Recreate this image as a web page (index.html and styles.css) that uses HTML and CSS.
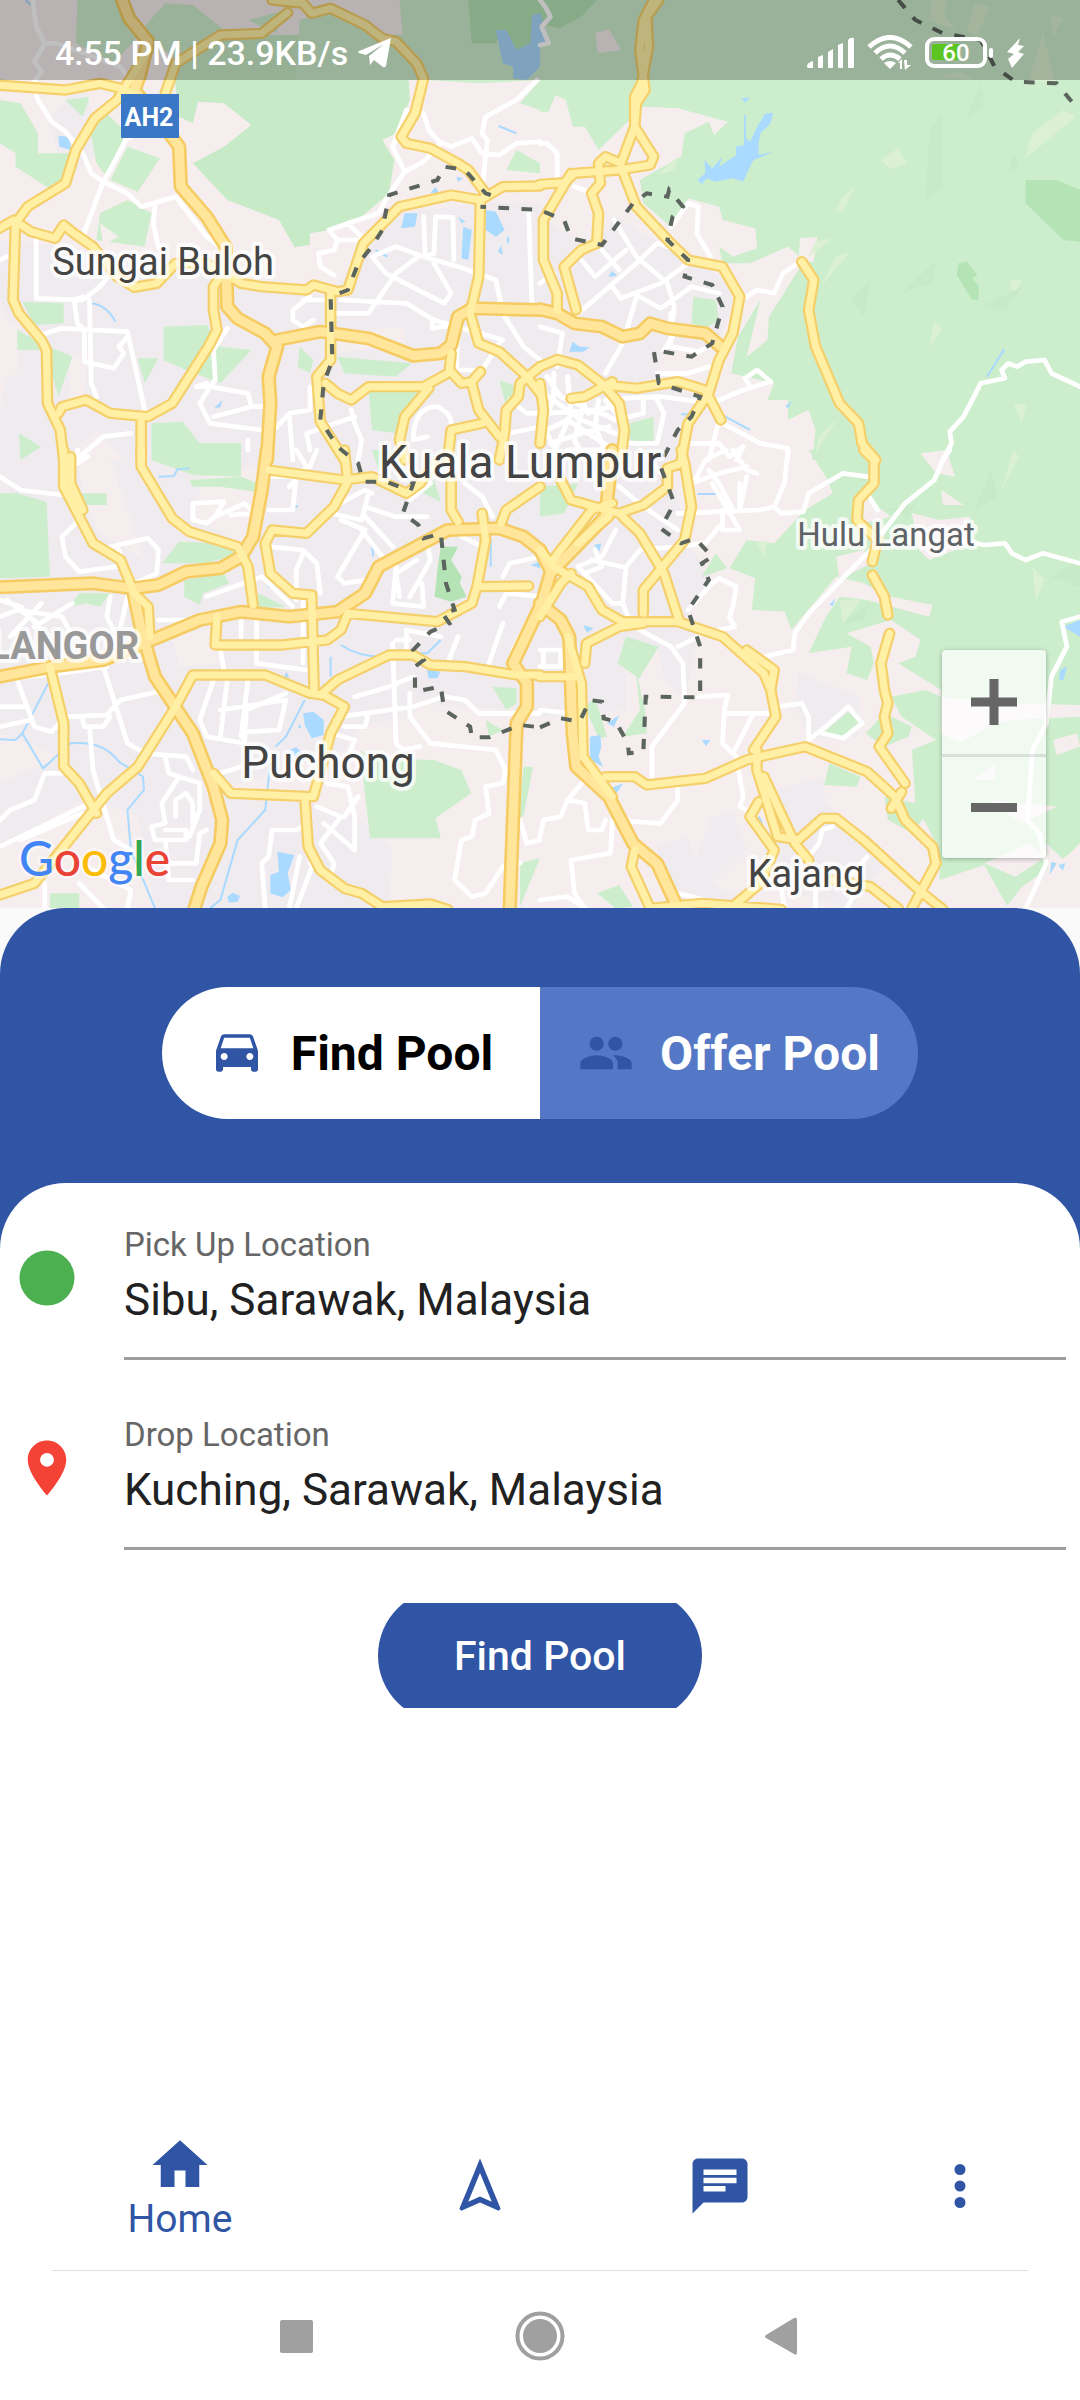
FILE: index.html
```html
<!DOCTYPE html>
<html lang="en">
<head>
<meta charset="utf-8">
<meta name="viewport" content="width=device-width, initial-scale=1">
<title>Car Pool</title>
<link rel="stylesheet" href="styles.css">
</head>
<body>
<section class="map" aria-label="Map of Kuala Lumpur">
  <svg class="map-canvas" viewBox="0 0 1080 908" preserveAspectRatio="xMidYMid slice">
    <defs>
      <g id="highways">
        <path d="M355 0L375 55L430 125L405 230L390 270L470 370L520 440L525 560L600 650L655 740L660 920L690 955L770 1000L805 1040L780 1130L785 1210L775 1380M805 1020L930 995L1070 1015L1200 1067L1280 1060L1310 1035L1330 950L1370 925L1568 930"/>
        <path transform="translate(1568 0)" d="M0 928L50 940L100 970L180 980L240 1010L290 1000L320 970L370 985L480 1000L525 1040"/>
        <path transform="translate(0 1350)" d="M775 0L760 120L735 260L700 320L640 355L540 365L460 405L385 415L270 400L0 412M385 415L410 540L450 680L560 850L620 1010L645 1110L640 1180L585 1310L565 1375M0 680L150 650L300 630L430 575L580 510L700 485L840 500L980 485L1060 430L1100 350L1300 240L1450 235L1520 260L1568 300M1568 470L1490 640L1530 700L1530 770L1500 820L1480 1375"/>
        <path transform="translate(1568 1350)" d="M0 480L30 370L190 200L210 0M0 300L30 360M0 460L60 510L85 560L95 850L105 950L200 1040L270 1180L340 1240L400 1375"/>
      </g>
      <g id="arterials">
        <path d="M-10 255L190 270L290 250L350 265L390 280M430 150L340 300L275 355L220 450L190 550L80 620L45 670L38 900L55 940L120 1020L135 1050L138 1210L175 1290L185 1380M480 280L510 190L640 105L760 100L835 38M790 0L880 10L905 40L960 25L1060 75L1110 115L1150 125L1210 190L1230 235L1205 340L1165 410L1180 430L1250 445L1330 490L1360 510L1410 580M-10 690L40 660L90 695L160 715L185 675L215 700L270 740L340 830L390 862L455 850L510 790L600 790L700 850L760 860L890 870L910 855L980 875L1010 870L1055 730L1160 620L1310 585L1395 600L1460 560L1568 558"/>
        <path d="M640 830L620 860L620 930L630 990L605 1040L500 1210L430 1250L320 1240L250 1200L180 1220L170 1240M410 1250L410 1380M960 880L960 1080L920 1130L930 1265L1000 1380M1395 600L1390 830L1365 940L1390 1030L1450 1055L1530 1130L1568 1180M945 1150L980 1180L1020 1200L1070 1160L1230 1160L1300 1120M1310 1060L1305 1110L1340 1150L1370 1145L1395 1115M1370 1150L1390 1230L1450 1310M1245 1165L1175 1250L1160 1320L1175 1380M1400 1270L1310 1290L1300 1380M1568 1100L1510 1150L1505 1190L1470 1230L1465 1300L1450 1380"/>
        <path transform="translate(1568 0)" d="M0 553L70 548L100 520L230 510L320 495L330 470L275 380L280 310L305 270L290 150L300 60L330 0M345 0L310 50L315 140L295 250L275 290L275 380L235 490L190 470L170 490L175 550L150 580L170 640L165 730L120 750L70 800L105 930M90 520L10 660L10 780L50 880L50 930M235 500L280 620L380 730L430 780L530 800L580 890L560 1000L520 1080L490 1180L430 1270L410 1380M0 1100L50 1078L110 1095L185 1155L280 1165L400 1145L480 1170L525 1260M90 1195L130 1190L210 1145M185 1155L230 1210L245 1290L235 1380M0 1150L10 1230L0 1330M760 785L795 840L780 930L800 1040L870 1210L925 1270L935 1330L975 1380"/>
        <path transform="translate(0 1350)" d="M185 0L185 110L235 210L270 280L350 330L390 430L430 470L435 560M205 20L205 100L240 180M410 0L410 50L500 205L550 245L690 290L720 350L735 465M780 60L1000 90L1080 80L1180 130L1220 100L1260 40M1000 0L1010 95L970 170L890 250L790 240L770 280L785 370L850 430L905 435L912 720M630 500L625 585L820 585L950 570L990 540L1010 490L1270 515L1370 460L1385 410L1535 408M1385 410L1410 270L1400 190M145 650L185 820L185 950L230 1000L280 1090M0 1335L100 1300L310 1030L400 950L510 770L560 675L770 675L900 730L940 735L1000 770L960 850L910 1040L670 1030L620 970M885 1040L895 1190L930 1260L1000 1315L1050 1330L1110 1370L1250 1362L1300 1378M930 735L980 690L1130 615L1200 615L1250 645L1350 650L1500 675L1568 675M1310 80L1310 180L1330 215M1568 110L1470 180L1455 220"/>
        <path transform="translate(1568 1350)" d="M0 680L100 680M0 300L40 350L140 410L180 480L240 515L400 515L530 560L650 670L670 720L685 800L620 900M600 600L680 660L670 720M130 640L135 580L230 530L300 520M300 490L300 420L420 270L440 170L420 40L410 0M240 200L290 250L360 370L405 515M60 90L90 150L230 190L300 165L370 110L370 55L410 40M30 340L150 180L210 160M110 280L200 200M0 500L60 400L90 370M80 560L120 700L125 920L210 1040M190 980L275 980L310 1005L480 985L600 930L660 915L770 890L950 965L1030 1040L1060 1110L1140 1190L1150 1240L1080 1375M1020 1075L1050 1025M630 900L630 960L690 1160L750 1170L820 1105L860 1105L940 1170L1100 1320L1170 1378M650 980L740 1180L780 1230M635 1055L610 1100L680 1200L640 1300L570 1360M850 1290L960 1310L1040 1375M275 1200L265 1250L320 1375L470 1360L700 1378"/>
        <path transform="translate(1568 1350)" d="M940 0L970 30L970 100L925 150L920 210L980 270L965 335M965 375L1000 440L1010 495M1015 550L990 640L1000 720L1010 760L1000 800L1010 850L985 890L1060 1000"/>
      </g>
    </defs>
    <rect width="1080" height="908" fill="#f6eeee"/>
    <g transform="scale(.34439 .33333)">
      <g fill="#efebef">
        <path d="M0 720L100 730L600 800L700 860L960 890L1050 740L1150 640L1400 610H1568V1380H0V1230L40 1000L0 900ZM240 240L140 360L190 540L300 440Z"/>
        <path transform="translate(1568 0)" d="M0 650L150 740L220 650L400 760L530 830L560 900L520 1030L350 1050L340 1150L460 1190L400 1380H0Z"/>
        <path transform="translate(0 1350)" d="M0 0H1568V780L1240 770L1190 800L1040 830L1000 900L700 1000L640 1000L700 1050L900 1060L1040 1100L1140 1200L1130 1375H450L400 1100L250 1040L0 1200V1000L180 920L0 850Z"/>
        <path transform="translate(1568 1350)" d="M0 0H360L440 300L500 380L430 480L460 560L420 740L360 690L340 590L250 600L250 780L120 800H0ZM750 670L930 740L920 860L780 870L740 760ZM560 1090L600 1200L500 1300L640 1375H380L340 1190L430 1160L450 1230L500 1100ZM690 1020L820 980L830 1060L1000 1240L900 1375L640 1300Z"/>
      </g>
      <g fill="#f6eeee">
        <path d="M0 980L60 960L50 1120L0 1150ZM200 1060L260 1060L240 1190L200 1200ZM280 1290L360 1380H180ZM960 1000L1170 980L1180 1030L970 1060Z"/>
        <path transform="translate(0 1350)" d="M220 0L310 0L420 330L280 240L240 120ZM500 560L620 530L640 640L520 650ZM600 60L760 50L750 240L700 280L560 200ZM1200 760L1500 780L1480 880L1200 900Z"/>
      </g>
      <g fill="#cdeecd">
        <path fill="#c7ebc7" d="M500 180L640 105H1180L1190 300L1150 400L1110 420L1145 480L1130 580L1050 650L960 690L900 700V735L855 742L810 660L660 600L560 490L650 440L730 375L650 310L575 305L560 370L520 350Z"/>
        <path d="M720 60L830 30L800 100ZM870 60L960 30L1080 90L1170 120L1160 0H1568V240L1390 250L1240 240L1180 240H860ZM225 0H340L400 110L330 190L220 130ZM410 90L480 10L560 15L650 90L510 180ZM0 300L60 310L110 400L110 460L220 460L200 540L150 570L45 500V460L0 430ZM190 300L260 290L240 350ZM260 380L310 340L370 400L310 530L280 490ZM370 440L465 475L400 575L320 540ZM290 640L370 600L440 640L420 740L280 720ZM475 980L600 975L640 1040L730 1050L640 1150L540 1110L475 1080ZM65 905L185 910V970L100 975ZM50 990L120 1030L210 1070L170 1190L130 1050H50ZM980 1070L1195 1090L1150 1130L1000 1120ZM1070 1170L1230 1170L1150 1300L1080 1290ZM440 1270L530 1265L580 1330H700V1430L560 1425L440 1380ZM400 1075L460 1075L420 1150ZM55 1300L120 1340L60 1380ZM1510 310L1568 240V330ZM1500 450L1568 490V520L1470 510ZM870 1040L910 1080L900 1120L865 1100ZM1450 1140L1500 1160L1470 1220Z"/>
        <path transform="translate(1568 0)" d="M0 0H1568V1380H790L800 1290L780 1230L720 1260V1200H660L680 1150L555 1120L575 1010L640 900L600 1070L660 1020L665 950L750 810L755 770L720 740L610 790L530 790L520 740L560 770L630 745L625 685L530 660L520 620L430 595L380 680L300 610L290 540L340 510L410 470L420 400L490 365L505 405L545 365L400 325L300 320L250 370L170 450L130 380H95L75 300L45 285L25 335H0ZM445 890L510 900L520 960L480 985L440 970ZM260 1270L330 1250V1330L260 1320Z"/>
        <path transform="translate(0 1350)" d="M0 130L50 130L135 155L145 380L0 385ZM215 130H310V165H240ZM470 340L520 275L640 280L700 310L600 340ZM535 390L650 370L665 400L590 430L580 465L535 440ZM550 90L700 80L750 100L740 125L640 110L560 110ZM750 430L830 470L750 475ZM1045 900L1080 925L1260 930L1340 960L1368 1030L1265 1105L1280 1165H1075ZM1430 710L1500 715V760L1470 780ZM145 1330H230V1375H145ZM1520 950H1548L1520 1100H1505ZM1510 1240L1568 1225L1530 1320L1510 1370ZM200 470L230 430L320 430L290 470L250 460ZM1210 120L1260 90L1280 155ZM1410 810L1460 840L1420 860ZM1080 0H1160L1100 60ZM0 880V910Z"/>
        <path transform="translate(1568 1350)" d="M780 0H1568V1180L1520 1230L1470 1180L1480 1375H1360L1290 1245L1160 1290V1200L1110 1100L1140 1070L1080 1150L1010 1110L1000 1040L1090 1060L1080 900L1150 870L1050 800L1020 740L1120 720L1165 740V720L1040 640L1090 620L1105 570L1020 510L890 550L960 590L970 640L950 690L890 670L905 590L780 610L830 500L870 440L950 450L1130 500L1140 465L1020 440L940 400L860 380L730 540L710 485L615 480L625 385L550 355L600 270L680 280L770 180L850 130L830 80ZM250 560L345 590L285 690L305 780L310 850L240 860L290 780L280 680L225 640ZM130 770L160 745L195 860L170 865ZM840 940L930 980L920 1010L825 1005ZM945 850L1000 790L1080 830L1070 860L1000 890ZM165 1330L230 1305L270 1370L220 1375ZM470 380L510 310L545 355ZM0 110L110 100L70 190L0 200ZM820 850L895 785L930 820L875 865Z"/>
      </g>
      <g fill="#f6eeee">
        <path d="M290 670L345 710L300 735Z"/>
        <path transform="translate(1568 0)" d="M755 715L805 712L795 785L750 790ZM160 100L200 88L235 150L168 160ZM1105 1365L1170 1365L1150 1380Z"/>
        <path transform="translate(1568 1350)" d="M1105 10L1180 0L1205 80L1150 70ZM1165 120L1230 165L1170 165ZM860 320L940 300L960 340L870 390ZM1080 190L1160 210L1250 200L1230 290L1130 330L1100 300ZM940 140L1020 200L940 220ZM1490 870L1560 850L1568 890L1500 915ZM1165 740L1350 760L1568 765V800L1370 810L1300 830L1220 880L1165 850ZM1290 1240L1420 1180L1470 1220L1380 1280ZM1170 1290L1260 1290L1270 1375H1180ZM1400 1310L1568 1190V1375H1350ZM1260 990L1320 940V990ZM1300 1050L1500 1070L1400 1120Z"/>
      </g>
      <g fill="#b4e3b5">
        <path d="M1360 0H1568V140L1500 150L1460 90L1440 130H1370Z"/>
        <path transform="translate(1568 0)" d="M1410 540H1500L1568 570V725L1520 720L1410 610ZM1215 790L1240 785L1270 825L1255 835L1275 860L1272 900H1255L1210 825ZM0 0H165L120 50L55 85L0 70Z"/>
        <path transform="translate(0 1350)" d="M1280 290L1330 290L1310 330L1340 380L1335 400L1355 440L1310 455L1262 440L1270 360Z"/>
      </g>
      <g fill="#dbf1d2">
        <path transform="translate(1568 0)" d="M1410 475L1430 400L1520 330L1555 350ZM990 480L1040 445L1065 490L1020 508ZM860 630L880 590L915 560L880 635ZM815 860L860 770L900 755ZM1130 1045L1145 965L1168 985ZM1365 840L1400 840L1375 895ZM1375 1210L1412 1215L1400 1270ZM1420 240L1460 100L1498 250ZM1135 0L1180 0L1175 50L1210 90L1130 60ZM1260 10L1305 20L1270 110L1240 90ZM1480 45L1520 55L1490 110ZM340 525L400 470L390 510ZM1160 230L1220 215L1260 240ZM800 1360L810 1310L865 1255ZM780 770L800 725L850 715Z"/>
        <path transform="translate(1568 1350)" d="M870 450L930 450L880 520ZM1430 350L1465 390L1440 450ZM1340 120L1375 0L1390 20ZM630 280L660 270L650 320Z"/>
      </g>
      <g fill="#c8eac7">
        <path transform="translate(1568 0)" d="M1130 400L1165 340L1170 560L1120 600ZM1360 520L1375 460L1390 500ZM900 900L960 840L940 950ZM1240 350L1280 250L1290 320ZM1050 880L1150 780L1140 850ZM1280 920L1400 860L1350 930Z"/>
        <path transform="translate(1568 1350)" d="M1000 180L1090 160L1070 200ZM880 520L955 460L940 510ZM1260 180L1310 60L1330 140ZM1480 380L1568 330V410Z"/>
      </g>
      <g fill="#aadaff">
        <path d="M170 408L200 410L207 450L172 440ZM1440 90L1470 90L1500 150L1540 130L1545 45L1568 40V200L1530 240L1490 235L1490 200L1460 190ZM1175 640L1212 640L1205 680L1165 685ZM1410 630L1440 635L1465 690L1440 710L1410 690ZM1345 680L1370 690L1360 780L1340 775ZM1330 650L1352 665L1340 670ZM1455 735L1460 765L1446 755ZM1265 560L1275 580L1250 578ZM1325 530L1345 535L1330 545ZM645 1200L640 1222L622 1225Z"/>
        <path transform="translate(1568 0)" d="M585 295L608 293L597 308ZM593 345L598 345V415L610 425L630 380L655 340L677 338L670 370L640 400L635 430V465L678 455L620 480L605 510L590 545L560 535L510 545L485 535L470 552L457 540L480 520L478 480L500 505L530 470L520 500L570 465L568 440L592 435ZM0 40L30 130H0ZM85 1055L95 1025L115 1040L145 1042L125 1055ZM198 830L210 812L224 828ZM720 1225L712 1218L733 1203Z"/>
        <path transform="translate(0 1350)" d="M880 790L910 785L940 810L940 855L905 865L885 825ZM870 820L875 835L866 835ZM805 1205L855 1215L835 1270L845 1320L820 1342L785 1330V1275L810 1265ZM660 1340L675 1328L697 1338L690 1355L665 1358ZM1240 660L1278 665L1270 685H1245ZM840 900L860 892L880 910L860 930ZM570 1090L582 1082V1102ZM775 405L790 400L780 415ZM825 680L832 665L840 685ZM1540 345L1568 335V355Z"/>
        <path transform="translate(1568 1350)" d="M145 860L175 855L178 890L170 920L183 950L145 930ZM195 820L230 795L215 830ZM205 1015L242 1000L222 1030ZM125 525L155 535L137 548ZM470 870L495 870L482 888ZM1520 530L1568 510V560ZM1510 660L1530 650L1520 690H1507ZM1485 1235L1500 1240L1480 1275ZM1505 1245L1525 1240L1518 1262ZM840 465L858 445L850 468ZM158 285L178 280L172 305Z"/>
      </g>
      <g fill="none" stroke="#aadaff" stroke-width="6">
        <path d="M75 0L90 15M265 910Q310 915 335 965M1448 378L1500 400M1475 710V730M1090 750L1125 770"/>
        <path transform="translate(0 1350)" d="M0 868L45 870L65 850L125 955L205 880Q300 870 345 935L415 980L418 1020L370 1080L380 1200L450 1375M65 850L140 700M460 80L505 78L515 58L550 55M800 890L830 860L885 750M785 940L770 1080L690 1170L640 1350L610 1375M990 585Q1040 620 1110 620M1205 610L1240 610L1280 570M960 620V680M1080 270L1083 320M1425 270V350M840 180L865 168"/>
        <path transform="translate(1568 0)" d="M1298 1130L1348 1048M520 1240L610 1290M410 1243H430"/>
        <path transform="translate(1568 1350)" d="M458 132H520M635 1100L645 1120"/>
      </g>
      <g fill="none" stroke="#fff" stroke-width="14" stroke-linejoin="round" stroke-linecap="round">
        <path d="M95 0L105 80L130 130L165 130L350 200L370 230M130 130L100 185L120 215L95 250L110 300L150 365L190 395L240 460L265 520L300 545L370 580L410 620L510 590L600 710L650 750M450 620L445 670L460 740M300 545L240 710M300 545L330 490L365 420L400 400M105 720V895L240 900L290 860L330 810M240 890L215 900L225 970L245 990V1085L330 1105L360 1060L345 1040L370 1010M260 900L265 1150L280 1190M100 1010L180 985L370 995L420 1230M660 985L620 1050L625 1140L610 1160L570 1160L600 1150M610 1160L580 1210L610 1270L760 1290M610 1160L720 1180L730 1220L620 1250M720 1320V1350M220 1380L300 1310L380 1300"/>
        <path d="M1560 240L1500 300L1410 350L1400 400L1415 420L1400 570M1230 340L1245 390L1275 425L1310 440L1370 415L1400 460L1450 465L1500 430L1568 425M1180 330L1140 440L1175 515L1120 600L1100 640L1010 670L955 690L980 720L1050 720M1175 515L1230 485L1280 430M1010 670L1050 710M980 720L970 750L925 760L930 800L970 825M1080 770L1150 740L1230 770L1330 800L1440 840L1460 940L1520 1040L1568 1080M1080 770L1120 820L1290 910L1310 880L1260 790M1215 770L1150 820L1070 940H980M990 900L1180 910L1260 960L1330 980L1460 1020M1255 960V985L1320 975M1230 650L1235 770L1260 760L1265 650L1315 652L1318 780M1535 630L1545 930M900 890L850 930V960L880 980L910 960M880 900L960 900M1330 1000L1325 1110L1400 1110L1450 1030M900 1160V1230L840 1240L800 1285M840 1240L850 1380M1020 1230L1030 1270L1050 1320L1040 1380M900 1350L890 1300L1030 1250M1200 1320Q1200 1220 1270 1220Q1310 1240 1310 1270M1200 1320L1240 1310M1480 1200L1530 1240L1568 1240M1480 1300L1568 1280M740 1220H760M0 780L20 770"/>
        <path transform="translate(1568 0)" d="M0 0L15 20L30 50L5 80L25 130L0 135M0 430H20L50 460V540M100 560L140 575M380 680L430 610L460 620L455 700L495 770M600 890L630 870L680 880L705 820L755 785M215 660L280 770L370 850L390 920L385 960V1010L360 1050M120 780L160 830L250 750M100 950L280 790L340 730L400 750M210 860L235 895L350 850L430 790M270 880L350 925L400 890L440 860L520 880M280 890L260 960L240 1030L190 1120M180 750L230 810M380 940V1040L460 1055L510 1030M340 1120L430 1120L490 1100M520 1200L590 1170L670 1145L630 1110L595 1135L610 1160M240 1195L350 1190L500 1210M0 980L65 1000L50 1100M530 1270L640 1330L720 1345V1380M430 1330L520 1330L550 1370L590 1340L570 1380M520 1260L490 1380M340 1200L360 1240L340 1330L260 1330M0 850L40 820M1568 1160L1485 1120L1465 1080L1410 1085L1385 1100L1360 1090L1340 1110L1350 1135L1280 1150L1230 1250L1190 1295L1195 1330L1170 1380"/>
        <path stroke-width="15" transform="translate(1568 0)" d="M20 1130L60 1190L130 1220M10 1180L120 1260L220 1300M40 1120V1190L10 1280L60 1380M80 1130L90 1240L40 1360M130 1200L100 1320L130 1380M170 1200L160 1280L200 1380M20 1240L160 1230L220 1260M0 1300L80 1260L200 1340M30 1330L120 1300L200 1280M80 1350H220M140 1240L200 1220M190 1200L230 1250M260 1250L300 1240V1200"/>
        <path transform="translate(0 1350)" d="M0 80L60 120L180 135M225 0V40L255 20M220 220L180 260L190 320L230 365L340 350M320 290L430 265L460 300L455 370L390 400M340 290L360 340M560 160L650 155L625 200L600 220L560 210ZM625 200L710 160L740 190L670 195M780 80H860L850 180H780M860 0L890 50L840 110M920 0L900 50M970 170L1060 120L1080 130M1070 130L1060 170L1150 200L1240 200M960 190L1050 210L1060 170M990 210L1060 240L980 380L1000 400L1060 390M1050 240L1110 320M1060 200L1140 290M1150 350L1140 460L1230 470L1225 400M1240 280L1250 330L1190 440M1160 440L1150 370L1210 330M780 290L880 300L920 340L930 430M880 310L860 360V450M600 440L760 380L850 470M460 510H560M745 510V640L890 660M700 515L700 560M640 600L650 660M620 690L580 810L600 860L710 880L715 780L830 730M640 780L830 750L810 840L720 845M660 690L640 860M720 690L700 860M880 440V640M1280 560L1180 540V600M1150 570H1190M1140 580L1150 880L1170 900L1220 890M1190 730V800L1250 880L1440 900L1468 960L1460 1000L1410 1010L1420 1090L1380 1110L1370 1160L1340 1170L1320 1290L1370 1340M990 800L1200 770L1290 740L1350 750L1390 790L1568 790M1030 740L1130 710L1200 680M960 850L1030 870L1010 920M1070 790L1060 830L1000 830M1450 470L1470 430L1568 440M1460 520L1420 640M1530 520L1490 600M1330 560L1300 640M1340 260L1400 290M1460 380L1480 340L1568 320M1420 30L1340 80M1350 100L1400 140L1430 200M1250 100L1190 150"/>
        <path transform="translate(0 1350)" d="M0 450L60 470L130 550M0 500L50 480L180 500L200 540M20 450L110 520M30 560L120 460M100 530L210 460M320 440L310 500L330 540M370 440L350 530M300 650L370 880L420 910L540 920L560 960M310 650L170 670L0 690M50 690L100 830L150 845L180 810M0 770H80M0 830L90 810M200 800L310 795L350 750L480 720M240 810L245 830L300 830L320 800M260 830L270 960L290 1030L330 1170L380 1200M180 970L130 970L100 1050L30 1080L0 1110M0 1190L80 1150L260 1060M60 1170L240 1090M480 920L490 970L520 980L470 1060L480 1120L440 1130L450 1170L540 1170V1140H480M520 980L580 1000L580 1080L550 1160M510 1100V1050L540 1030L560 1060V1120M600 1140L580 1150L570 1240H470M480 1170L490 1290H560M640 970L700 950M920 1070L990 1100L930 1180L970 1240L960 1280L900 1240M940 1120L1030 1200L1030 1100L1010 1010L950 1000M1040 1040L1000 1100M880 1130L860 1140H790L780 1220L760 1240L770 1375M870 1220L840 1375M910 1240L860 1375M130 1300V1375M230 1300L300 1375M250 1250L380 1320L370 1375M1510 1110L1530 1180L1568 1170M1370 1340L1410 1330L1460 1250L1510 1240"/>
        <path transform="translate(1568 1350)" d="M720 0L710 100L680 170L700 190L765 185L780 130L880 70L950 80M560 0L600 60L630 70M440 100L520 70L600 50M400 190L520 185L640 180L680 170M540 0L480 30L450 90M500 100L580 240H530V180M490 60L520 100L560 180M580 100V180L600 80M290 0L380 100M230 110L300 170L400 240M220 240L180 320L110 350L210 460H240L250 350L290 300L400 290L480 280L520 230M150 330L240 350M130 370L180 350L160 300M240 460L260 510M290 540L380 590L415 640L420 760L390 800L325 890V980M400 590L460 560M460 740L545 735L535 780L530 880L570 920L590 1040L580 1070L620 1090M540 790L690 790M620 790L560 910M690 770L760 760L780 800V870L830 830L895 770L935 820L880 865L820 850M430 480L500 400L520 385L570 410L560 470L550 500L565 530L520 540M650 620L735 600L740 550L780 490L960 300L1000 240L1060 160L1145 90L1170 30L1190 0M1220 270L1290 285L1350 280L1370 310L1410 330L1460 310L1568 340M980 180L950 130M1568 500L1515 515L1530 590L1485 680L1470 820L1430 900L1415 1110L1450 1150L1470 1240L1410 1375M0 600H60V650H0M10 600V650M0 780L90 790M400 1000V1050L350 1120L210 1110L205 1210L90 1230L100 1330L130 1375M130 990L80 1050L130 1060L140 1140L180 1140L190 1110M80 1050L60 1100L10 1110L0 1160M820 1140L810 1180L780 1220M850 1130L820 1140M700 1310L710 1375M800 1300V1375M950 1220L890 1290M910 1340L890 1375M0 1350L80 1340L130 1375M400 1330L480 1350"/>
      </g>
      <g fill="none" stroke-linejoin="round" stroke-linecap="round">
        <use href="#arterials" stroke="#f5d06a" stroke-width="34"/>
        <use href="#highways" stroke="#f5cb62" stroke-width="42"/>
        <use href="#highways" stroke="#ffe69b" stroke-width="27"/>
        <use href="#arterials" stroke="#fff0a6" stroke-width="21"/>
      </g>
      <g fill="none" stroke="#5c645e" stroke-width="12" stroke-dasharray="31 36">
        <path d="M1425 585L1410 580L1350 510L1290 500L1270 540L1130 585L1110 690L1080 740L1040 790L1010 870L960 890L965 1080L940 1150L930 1260L980 1340L1040 1390L1055 1445L1120 1445L1160 1460L1200 1450L1170 1540L1215 1575L1230 1615L1280 1600L1295 1750L1320 1830L1285 1840L1305 1870L1250 1895L1200 1950L1230 1980L1205 2000V2075L1280 2060L1290 2130L1365 2180L1370 2212H1420L1510 2175L1568 2182"/>
        <path transform="translate(1568 1350)" d="M0 832L60 805L115 815L145 750L180 755L185 805L220 815L255 880L258 910L300 905L307 740L465 742V590L430 480L490 390L470 340L500 320L450 265L410 280L350 235L390 160L350 50L360 20L400 -60L440 -100L465 -160L345 -200L330 -300L440 -280L500 -320L530 -430L500 -495L420 -520L430 -570L370 -630L385 -700L415 -730L375 -780L370 -760L310 -770L270 -740L180 -615L90 -635L70 -690L0 -720L-173 -730"/>
        <path transform="translate(1568 0)" d="M1040 0L1090 60L1170 100L1280 120L1320 200L1380 245L1500 250L1540 300L1568 330"/>
      </g>
    </g>
    <rect x="121" y="94" width="58" height="44" fill="#3a77c6"/>
    <text class="shield" x="149" y="126" text-anchor="middle">AH2</text>
    <g class="places">
      <text x="163" y="275" font-size="38" text-anchor="middle">Sungai Buloh</text>
      <text x="520" y="478" font-size="46" text-anchor="middle">Kuala Lumpur</text>
      <text x="328" y="778" font-size="44" text-anchor="middle">Puchong</text>
      <text x="806" y="887" font-size="38" text-anchor="middle">Kajang</text>
      <text class="minor" x="886" y="546" font-size="33" text-anchor="middle">Hulu Langat</text>
      <text class="state" x="139" y="659" font-size="38" text-anchor="end">LANGOR</text>
    </g>
    <text class="brand" x="19" y="876"><tspan fill="#4285f4">G</tspan><tspan fill="#ea4335">o</tspan><tspan fill="#fbbc05">o</tspan><tspan fill="#4285f4">g</tspan><tspan fill="#34a853">l</tspan><tspan fill="#ea4335">e</tspan></text>
  </svg>

  <header class="status">
    <span class="status-text">4:55 PM | 23.9KB/s</span>
    <svg class="plane" width="34" height="30" viewBox="0 0 34 30"><path d="M33 0L28 28Q27 30 25 29L16 22L12 27L11 18L26 6L8 17L1 15Q-1 14 1 13Z" fill="#fff"/></svg>
    <span class="status-icons">
      <svg width="48" height="32" viewBox="0 0 48 32" fill="#fff"><path d="M0 29Q0 26 6 24V31H1Q0 31 0 29ZM11 20L16 18V30Q16 31 15 31H12Q11 31 11 30ZM21 15L26 12V30Q26 31 25 31H22Q21 31 21 30ZM31 8L36 6V30Q36 31 35 31H32Q31 31 31 30ZM41 3Q43 0 47 1V30Q47 31 46 31H42Q41 31 41 30Z"/></svg>
      <svg width="46" height="36" viewBox="0 0 46 36"><g fill="none" stroke="#fff" stroke-width="5"><path d="M2 12Q23-7 44 12M8 18Q23 4 38 18M14 24Q23 16 33 24"/></g><path d="M17 28Q23 24 29 28L23 34ZM31 28L35 24V34H33V28ZM37 25H40V30H44L38 35Z" fill="#fff"/></svg>
      <svg width="70" height="32" viewBox="0 0 70 32"><rect x="2" y="2" width="58" height="27" rx="7" fill="none" stroke="#fff" stroke-width="4"/><path d="M9 7H35V23H9Q7 23 7 21V9Q7 7 9 7Z" fill="#5cc521"/><rect x="64" y="11" width="4" height="10" rx="2" fill="#fff"/><text x="31" y="24" text-anchor="middle" class="charge">60</text></svg>
      <svg width="18" height="32" viewBox="0 0 18 32"><path d="M13 1L0 15L7 17L1 22L5 31L17 17L11 15L17 9L11 8Z" fill="#fff"/></svg>
    </span>
  </header>

  <div class="zoom">
    <button type="button" aria-label="Zoom in"><svg width="46" height="46" viewBox="0 0 46 46"><path d="M0 18.500H18.500V0H27.500V18.500H46V27.500H27.500V46H18.500V27.500H0Z" fill="#666"/></svg></button>
    <button type="button" aria-label="Zoom out"><svg width="46" height="46" viewBox="0 0 46 46"><path d="M0 18H46V27H0Z" fill="#666"/></svg></button>
  </div>
</section>

<main class="panel-wrap">
  <div class="panel">
    <div class="switch">
      <button type="button" class="mode active">
        <svg width="56" height="56" viewBox="0 0 24 24"><path d="M18.920 5.010C18.720 4.420 18.160 4 17.500 4h-11c-.660 0-1.210.420-1.420 1.010L3 11v8c0 .550.450 1 1 1h1c.550 0 1-.450 1-1v-1h12v1c0 .550.450 1 1 1h1c.550 0 1-.450 1-1v-8l-2.080-5.990zM6.500 15c-.830 0-1.500-.670-1.500-1.500S5.670 12 6.500 12s1.500.670 1.500 1.500S7.330 15 6.500 15zm11 0c-.830 0-1.500-.670-1.500-1.500s.670-1.500 1.500-1.500 1.500.670 1.500 1.500-.670 1.500-1.500 1.500zM5 10l1.500-4.500h11L19 10H5z"/></svg>
        Find Pool
      </button>
      <button type="button" class="mode">
        <svg width="56" height="56" viewBox="0 0 24 24"><path d="M16 11c1.660 0 2.990-1.340 2.990-3S17.660 5 16 5s-3 1.340-3 3 1.340 3 3 3zm-8 0c1.660 0 2.990-1.340 2.990-3S9.660 5 8 5 5 6.340 5 8s1.340 3 3 3zm0 2c-2.330 0-7 1.170-7 3.500V19h14v-2.500c0-2.330-4.670-3.500-7-3.500zm8 0c-.290 0-.620.020-.970.050 1.160.840 1.970 1.970 1.970 3.450V19h6v-2.500c0-2.330-4.670-3.500-7-3.500z"/></svg>
        Offer Pool
      </button>
    </div>

    <form class="card">
      <div class="row">
        <svg width="66" height="66" viewBox="0 0 24 24"><circle cx="12" cy="12" r="10" fill="#4caf50"/></svg>
        <div class="field">
          <label for="pickup">Pick Up Location</label>
          <input id="pickup" type="text" value="Sibu, Sarawak, Malaysia">
        </div>
      </div>
      <div class="row">
        <svg width="66" height="66" viewBox="0 0 24 24"><path d="M12 2C8.130 2 5 5.130 5 9c0 5.250 7 13 7 13s7-7.750 7-13c0-3.870-3.130-7-7-7zm0 9.500c-1.380 0-2.500-1.120-2.500-2.500s1.120-2.500 2.500-2.500 2.500 1.120 2.500 2.500-1.120 2.500-2.500 2.500z" fill="#f44336"/></svg>
        <div class="field">
          <label for="drop">Drop Location</label>
          <input id="drop" type="text" value="Kuching, Sarawak, Malaysia">
        </div>
      </div>
      <button type="button" class="submit"><span>Find Pool</span></button>
    </form>
  </div>
</main>

<nav class="tabs">
  <a class="home" href="#home"><svg width="66" height="66" viewBox="0 0 24 24"><path d="M10 20v-6h4v6h5v-8h3L12 3 2 12h3v8z"/></svg>Home</a>
  <a href="#trips" aria-label="Trips"><svg width="66" height="66" viewBox="0 0 24 24"><path fill-rule="evenodd" d="M12 2L4.500 20.290l.710.710L12 18l6.790 3 .710-.710zM7.720 17.700L12 7.270l4.280 10.430L12 15.810z"/></svg></a>
  <a href="#chat" aria-label="Messages"><svg width="66" height="66" viewBox="0 0 24 24"><path d="M20 2H4c-1.100 0-1.990.900-1.990 2L2 22l4-4h14c1.100 0 2-.900 2-2V4c0-1.100-.900-2-2-2zM6 9h12v2H6V9zm8 5H6v-2h8v2zm4-6H6V6h12v2z"/></svg></a>
  <a href="#more" aria-label="More"><svg width="66" height="66" viewBox="0 0 24 24"><circle cx="12" cy="6" r="2"/><circle cx="12" cy="12" r="2"/><circle cx="12" cy="18" r="2"/></svg></a>
</nav>

<footer class="system">
  <button type="button" aria-label="Recent apps"><svg width="50" height="50" viewBox="0 0 50 50"><rect x="9" y="9" width="33" height="33" rx="2"/></svg></button>
  <button type="button" aria-label="Home screen"><svg width="50" height="50" viewBox="0 0 50 50"><circle cx="25" cy="25" r="17"/><circle cx="25" cy="25" r="22.500" fill="none" stroke="#a0a0a0" stroke-width="4"/></svg></button>
  <button type="button" aria-label="Back"><svg width="50" height="50" viewBox="0 0 50 50"><path d="M7 24L35 7Q38 6 38 9V41Q38 45 35 43L7 27Q5 25.500 7 24Z"/></svg></button>
</footer>
</body>
</html>
```
FILE: styles.css
```css
* { box-sizing: border-box; }

body {
  margin: 0;
  min-height: 100vh;
  display: flex;
  flex-direction: column;
  background: #fff;
  font-family: Roboto, "Liberation Sans", sans-serif;
}

button {
  border: 0;
  padding: 0;
  margin: 0;
  font-family: inherit;
  background: none;
}

svg { display: block; flex: none; }

/* Map */
.map { position: relative; overflow: hidden; }
.map-canvas { width: 100%; height: auto; }

.places text {
  fill: #444;
  stroke: rgba(255, 255, 255, .75);
  stroke-width: 8px;
  stroke-linejoin: round;
  paint-order: stroke;
}
.places .minor { fill: #5f6368; }
.places .state { fill: #999; font-weight: 700; }
.shield { fill: #fff; font-size: 25px; font-weight: 700; }
.brand {
  font-family: Lato, sans-serif;
  font-size: 48px;
  font-weight: 500;
  stroke: rgba(255, 255, 255, .5);
  stroke-width: 5px;
  paint-order: stroke;
}

.status {
  position: absolute;
  top: 0;
  left: 0;
  right: 0;
  height: 80px;
  padding: 26px 55px 0;
  display: flex;
  align-items: center;
  background: rgba(0, 0, 0, .25);
  color: #fff;
}
.status-text { font-size: 34px; font-weight: 500; }
.plane { margin-left: 10px; }
.status-icons { margin-left: auto; display: flex; align-items: center; gap: 12px; }
.charge { fill: #fff; font-size: 24px; font-weight: 500; }

.zoom {
  position: absolute;
  right: 34px;
  bottom: 50px;
  width: 104px;
  border-radius: 4px;
  background: rgba(255, 255, 255, .7);
  box-shadow: 0 1px 5px rgba(0, 0, 0, .3);
}
.zoom button {
  width: 100%;
  height: 104px;
  display: flex;
  align-items: center;
  justify-content: center;
}
.zoom button + button { border-top: 3px solid rgba(0, 0, 0, .1); }

/* Booking panel */
.panel-wrap { background: linear-gradient(#fafafa 80px, #fff 80px); }
.panel { background: #2f55a4; border-radius: 66px 66px 0 0; }

.switch {
  display: flex;
  width: 70%;
  margin: 0 auto;
  padding: 79px 0 64px;
}
.mode {
  flex: 1;
  height: 132px;
  display: flex;
  align-items: center;
  justify-content: center;
  gap: 26px;
  background: #5578c6;
  color: #fff;
  font-size: 48px;
  font-weight: 700;
  border-radius: 0 66px 66px 0;
}
.mode svg { fill: #2f55a4; }
.mode.active { background: #fff; color: #000; border-radius: 66px 0 0 66px; }

.card {
  padding: 40px 14px 0;
  background: #fff;
  border-radius: 66px 66px 0 0;
}
.row {
  display: flex;
  align-items: flex-start;
  gap: 44px;
  height: 190px;
}
.row svg { margin-top: 22px; }
.field { flex: 1; display: flex; flex-direction: column; }
.field label { font-size: 33px; line-height: 44px; color: #666; }
.field input {
  width: 100%;
  height: 93px;
  padding: 0 0 24px;
  border: 0;
  border-bottom: 3px solid #9e9e9e;
  outline: 0;
  background: none;
  font-family: inherit;
  font-size: 44px;
  color: #212121;
}

.submit {
  position: relative;
  display: block;
  width: 324px;
  height: 105px;
  margin: 0 auto;
  overflow: hidden;
  color: #fff;
  font-size: 41px;
  font-weight: 500;
}
.submit::before {
  content: "";
  position: absolute;
  inset: -14px 0;
  border-radius: 67px;
  background: #2f55a4;
}
.submit span { position: relative; }

/* Bottom tabs */
.tabs {
  margin: auto 0 0;
  display: flex;
  align-items: center;
  height: 168px;
}
.tabs a {
  flex: 2;
  display: flex;
  flex-direction: column;
  align-items: center;
  color: #2f55a4;
  font-size: 39px;
  line-height: 42px;
  text-decoration: none;
}
.tabs .home { flex: 3; }
.tabs svg { fill: #2f55a4; }

.system {
  margin: 0 52px;
  height: 130px;
  border-top: 1px solid #e0e0e0;
  display: flex;
  align-items: center;
  justify-content: center;
  gap: 194px;
}
.system svg { fill: #a0a0a0; }
```
